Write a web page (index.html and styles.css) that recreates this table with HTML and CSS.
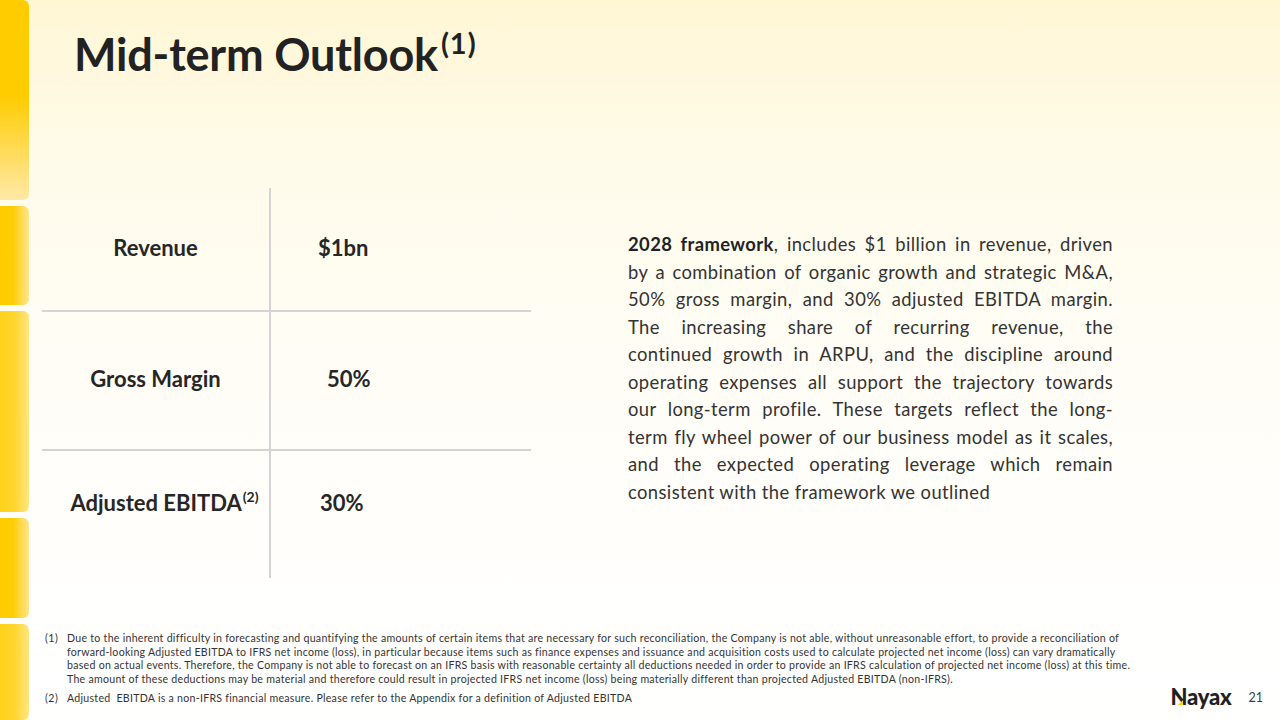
FILE: index.html
```html
<!DOCTYPE html>
<html lang="en">
<head>
<meta charset="utf-8">
<title>Mid-term Outlook</title>
<link rel="stylesheet" href="styles.css">
</head>
<body>
<div class="slide">
  <aside class="rail">
    <div class="bar bar-top"></div>
    <div class="bar bar-a"></div>
    <div class="bar bar-b"></div>
    <div class="bar bar-a"></div>
    <div class="bar bar-b"></div>
  </aside>
  <main class="main">
    <h1 class="title">Mid-term Outlook<sup class="title-sup">(1)</sup></h1>
    <section class="content">
      <div class="metrics">
        <div class="cell label row1"><span>Revenue</span></div>
        <div class="cell value row1 v1"><span>$1bn</span></div>
        <div class="cell label row2"><span>Gross Margin</span></div>
        <div class="cell value row2 v2"><span>50%</span></div>
        <div class="cell label row3"><span>Adjusted EBITDA<sup class="sup">(2)</sup></span></div>
        <div class="cell value row3 v3"><span>30%</span></div>
      </div>
      <p class="summary">
        <span class="ln"><strong>2028 framework</strong>, includes $1 billion in revenue, driven</span>
        <span class="ln">by a combination of organic growth and strategic M&amp;A,</span>
        <span class="ln">50% gross margin, and 30% adjusted EBITDA margin.</span>
        <span class="ln">The increasing share of recurring revenue, the</span>
        <span class="ln">continued growth in ARPU, and the discipline around</span>
        <span class="ln">operating expenses all support the trajectory towards</span>
        <span class="ln">our long-term profile. These targets reflect the long-</span>
        <span class="ln">term fly wheel power of our business model as it scales,</span>
        <span class="ln">and the expected operating leverage which remain</span>
        <span class="ln last">consistent with the framework we outlined</span>
      </p>
    </section>
    <footer class="footer">
      <ol class="notes">
        <li class="note"><span class="num">(1)</span><span class="txt">Due to the inherent difficulty in forecasting and quantifying the amounts of certain items that are necessary for such reconciliation, the Company is not able, without unreasonable effort, to provide a reconciliation of<br>forward-looking Adjusted EBITDA to IFRS net income (loss), in particular because items such as finance expenses and issuance and acquisition costs used to calculate projected net income (loss) can vary dramatically<br>based on actual events. Therefore, the Company is not able to forecast on an IFRS basis with reasonable certainty all deductions needed in order to provide an IFRS calculation of projected net income (loss) at this time.<br>The amount of these deductions may be material and therefore could result in projected IFRS net income (loss) being materially different than projected Adjusted EBITDA (non-IFRS).</span></li>
        <li class="note"><span class="num">(2)</span><span class="txt">Adjusted&nbsp; EBITDA is a non-IFRS financial measure. Please refer to the Appendix for a definition of Adjusted EBITDA</span></li>
      </ol>
      <div class="brand">
        <span class="logo">Nayax<span class="logo-mark"></span></span>
        <span class="page">21</span>
      </div>
    </footer>
  </main>
</div>
</body>
</html>
```

FILE: styles.css
```css
* { box-sizing: border-box; }
html, body { margin: 0; padding: 0; }
body {
  width: 1280px;
  height: 720px;
  overflow: hidden;
  font-family: Lato, "Open Sans", sans-serif;
  font-variant-ligatures: none;
  color: #262626;
}
.slide {
  width: 1280px;
  height: 720px;
  display: flex;
  background: linear-gradient(180deg, #fff6d4 0px, #fffbea 160px, #fffdf4 320px, #fffefb 520px, #ffffff 720px);
}
.rail {
  width: 29px;
  flex: none;
  display: grid;
  grid-template-rows: 200px 99px 201px 100px 1fr;
  row-gap: 6px;
  height: 720px;
}
.bar { border-radius: 0 6px 6px 0; }
.bar-top { background: linear-gradient(180deg, #ffcc00 0%, #ffcc00 48%, #ffe9a8 100%); }
.bar-a { background: linear-gradient(90deg, #ffcc00 0%, #ffcd05 45%, #ffe590 100%); }
.bar-b { background: linear-gradient(90deg, #ffd21c 0%, #ffd52e 50%, #ffe683 100%); }

.main {
  flex: 1;
  display: flex;
  flex-direction: column;
  min-width: 0;
}
.title {
  margin: 0;
  padding: 32px 0 0 45px;
  height: 188px;
  font-size: 45px;
  line-height: 1;
  font-weight: 700;
  color: #222;
  letter-spacing: -0.2px;
}
.title-sup {
  font-size: 29px;
  vertical-align: 17px;
  line-height: 0;
  margin-left: 3px;
  letter-spacing: 1px;
}
.content {
  display: flex;
  align-items: flex-start;
  height: 444px;
}
.metrics {
  margin-left: 13px;
  width: 489px;
  display: grid;
  grid-template-columns: 229px 260px;
  grid-template-rows: 124px 139px 127px;
}
.cell {
  display: flex;
  align-items: center;
  font-size: 22px;
  font-weight: 700;
  color: #262626;
}
.label {
  justify-content: center;
  border-right: 2px solid #d4d4d4;
}
.value { justify-content: flex-start; }
.row1, .row2 { border-bottom: 2px solid #d4d4d4; }
.row1 { padding-bottom: 4px; }
.row2 { padding-bottom: 4px; }
.row3 { padding-bottom: 24px; }
.label.row3 { padding-left: 18px; }
.v1 { padding-left: 47px; }
.v2 { padding-left: 56px; }
.v3 { padding-left: 49px; }
.sup {
  font-size: 14px;
  vertical-align: 9px;
  line-height: 0;
  margin-left: 1px;
}

.summary {
  margin: 43px 0 0 97px;
  width: 485px;
  font-size: 18.4px;
  line-height: 27.5px;
  letter-spacing: 0.4px;
  color: #333;
}
.ln {
  display: block;
  text-align: justify;
  text-align-last: justify;
  white-space: nowrap;
}
.ln.last { text-align-last: left; }
.summary strong { color: #222; }

.footer {
  display: flex;
  align-items: flex-end;
  justify-content: space-between;
  padding: 0 17px 15px 16px;
  flex: 1;
}
.notes {
  list-style: none;
  margin: 0;
  padding: 0;
  font-size: 10.6px;
  line-height: 13.5px;
  letter-spacing: 0.27px;
  color: #333;
  white-space: nowrap;
}
.note { display: flex; }
.note + .note { margin-top: 5.5px; }
.num { width: 22px; flex: none; letter-spacing: 0.5px; }
.brand {
  display: flex;
  align-items: center;
  gap: 17px;
  margin-bottom: -3px;
}
.logo {
  position: relative;
  font-size: 22px;
  font-weight: 900;
  color: #231f20;
  letter-spacing: -0.2px;
  line-height: 22px;
}
.logo-mark {
  position: absolute;
  left: 8px;
  bottom: 3px;
  width: 0;
  height: 0;
  border-left: 5px solid transparent;
  border-bottom: 5px solid #ffcc00;
}
.page {
  font-size: 12.5px;
  color: #404040;
}
```
